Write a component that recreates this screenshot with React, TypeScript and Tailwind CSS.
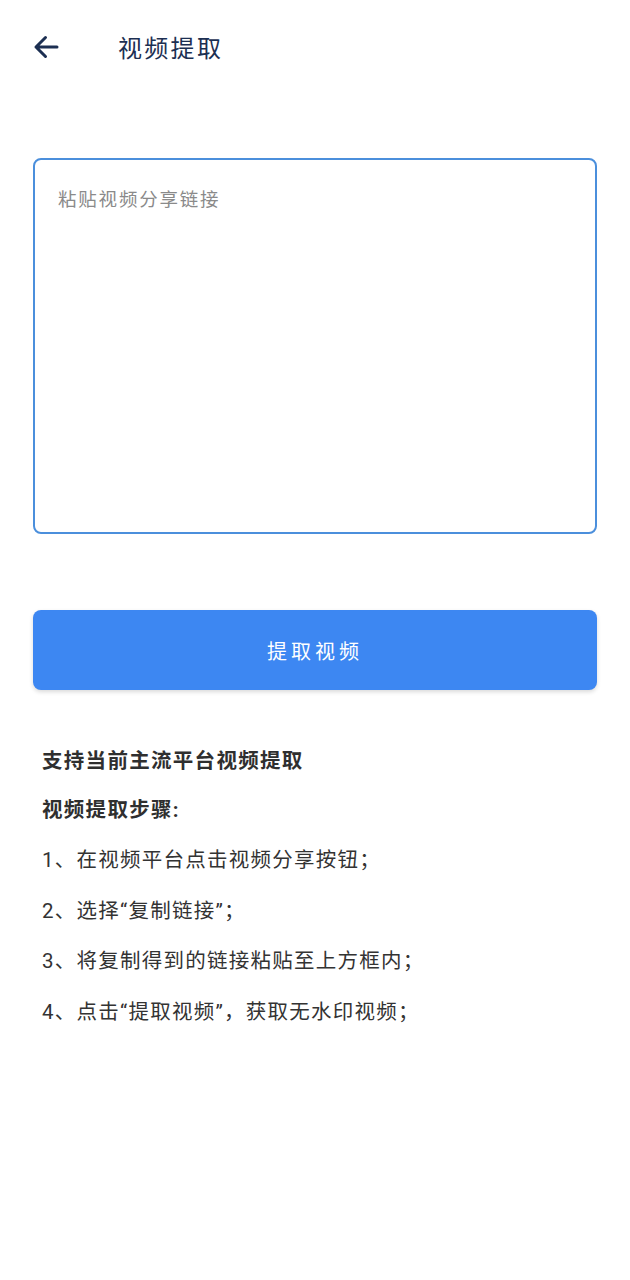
import { useState } from "react";

const font = {
  fontFamily:
    'Roboto, "Noto Sans CJK SC", "Noto Sans", "Liberation Sans", sans-serif',
};

function BackArrow() {
  return (
    <svg width="28" height="28" viewBox="0 0 28 28" fill="none">
      <path
        d="M25 14H4M13.5 4.5L4 14l9.5 9.5"
        stroke="#1c2f52"
        strokeWidth="3"
        strokeLinecap="round"
        strokeLinejoin="round"
      />
    </svg>
  );
}

export default function App() {
  const [link, setLink] = useState<string>("");

  const steps = [
    "1、在视频平台点击视频分享按钮；",
    "2、选择“复制链接”；",
    "3、将复制得到的链接粘贴至上方框内；",
    "4、点击“提取视频”，获取无水印视频；",
  ];

  return (
    <div className="w-[630px] h-[1280px] bg-white" style={font}>
      {/* header */}
      <div className="flex items-center h-[94px] pl-[32px]">
        <BackArrow />
        <span className="ml-[58px] pt-[3px] text-[24px] tracking-[2.3px] text-[#1c2f52]">
          视频提取
        </span>
      </div>

      <div className="px-[33px] pt-[64px]">
        <textarea
          value={link}
          onChange={(e) => setLink(e.target.value)}
          placeholder="粘贴视频分享链接"
          className="block w-full h-[376px] resize-none rounded-[8px] border-2 border-[#4b8fdc] px-[23px] pt-[25px] pb-[23px] text-[18.5px] leading-[30px] tracking-[1.8px] text-gray-800 placeholder:text-[#8a8a8a] outline-none"
          style={font}
        />

        <button
          className="mt-[76px] w-full h-[80px] pt-[4px] rounded-[8px] bg-[#3d87f2] text-white text-[20px] tracking-[4px] shadow-[0_2px_4px_rgba(0,0,0,0.15)]"
          style={font}
        >
          提取视频
        </button>
      </div>

      <div className="px-[42px] pt-[46px] text-[#2f2f2f]">
        <p className="text-[20.5px] font-bold leading-[50px] tracking-[1.3px]">
          支持当前主流平台视频提取
        </p>
        <p className="text-[20.5px] font-bold leading-[49px] tracking-[1.3px]">
          视频提取步骤:
        </p>
        {steps.map((s, i) => (
          <p
            key={"step_" + i}
            className="text-[20.5px] leading-[50.5px] tracking-[1.25px] text-[#333]"
          >
            {s}
          </p>
        ))}
      </div>
    </div>
  );
}
